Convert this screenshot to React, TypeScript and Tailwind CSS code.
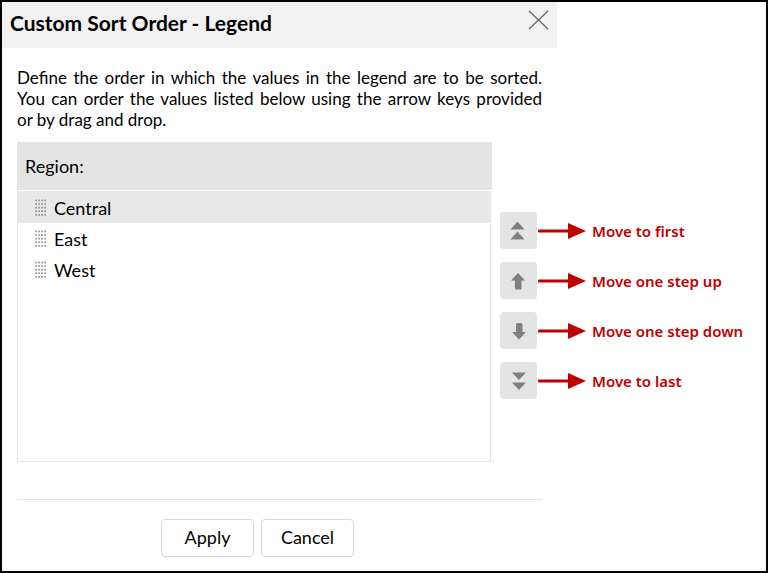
import { useState } from 'react';
import { clsx } from 'clsx';

interface MoveAction {
  id: string;
  label: string;
  path: string;
  target: (index: number, last: number) => number;
}

const actions: MoveAction[] = [
  {
    id: 'first',
    label: 'Move to first',
    path: 'M17.5 9.5L24.5 17.5H10.5ZM17.5 19.5L24.5 27.5H10.5Z',
    target: () => 0,
  },
  {
    id: 'up',
    label: 'Move one step up',
    path: 'M18 11L25 18.5H21.5V26Q21.5 27.5 20 27.5H16.5Q15 27.5 15 26V18.5H11Z',
    target: (index) => Math.max(0, index - 1),
  },
  {
    id: 'down',
    label: 'Move one step down',
    path: 'M19 27.5L26 20H22.5V12.5Q22.5 11 21 11H17.5Q16 11 16 12.5V20H12Z',
    target: (index, last) => Math.min(last, index + 1),
  },
  {
    id: 'last',
    label: 'Move to last',
    path: 'M12 10.5H26L19 18ZM12 20.5H26L19 28Z',
    target: (_, last) => last,
  },
];

function DragHandle() {
  return (
    <svg width="11" height="17" viewBox="0 0 11 17" fill="#8c8c8c" aria-hidden="true">
      {[0.3, 3.3, 6.3, 9.3].map((x) =>
        [0.6, 4.2, 7.8, 11.4, 15].map((y) => <rect key={`${x}-${y}`} x={x} y={y} width="1.6" height="1.7" />)
      )}
    </svg>
  );
}

function Pointer() {
  return (
    <svg width="49" height="18" viewBox="0 0 49 18" fill="#c00000" aria-hidden="true">
      <rect x="1" y="7.5" width="32" height="3" rx="1" />
      <path d="M31 1L49 9L31 17Z" />
    </svg>
  );
}

export default function App() {
  const [regions, setRegions] = useState(['Central', 'East', 'West']);
  const [selected, setSelected] = useState('Central');

  const move = (action: MoveAction) => {
    const from = regions.indexOf(selected);
    const next = regions.filter((region) => region !== selected);
    next.splice(action.target(from, regions.length - 1), 0, selected);
    setRegions(next);
  };

  return (
    <main className="min-h-screen border-2 border-black bg-white font-['Lato',sans-serif] text-lg text-black">
      <header className="flex h-[46px] max-w-[555px] items-start justify-between bg-[#f1f1f1] px-2 pt-[7px]">
        <h1 className="text-[21px] leading-7 font-bold">Custom Sort Order - Legend</h1>
        <button type="button" aria-label="Close" className="pt-px">
          <svg width="21" height="20" viewBox="0 0 21 20" fill="none" stroke="#666" strokeWidth="1.3">
            <path d="M1 1L20 19M20 1L1 19" />
          </svg>
        </button>
      </header>

      <div className="px-[15px]">
        <p className="max-w-[525px] pt-[19px] text-justify text-[17px] leading-[21px]">
          Define the order in which the values in the legend are to be sorted. You can order the values listed below
          using the arrow keys provided <span className="whitespace-nowrap">or by drag</span> and drop.
        </p>

        <div className="mt-3 flex items-start gap-2">
          <section className="max-w-[475px] flex-1">
            <h2 className="flex h-12 items-center bg-[#e4e4e4] px-2">Region:</h2>
            <ul className="mt-px mr-px h-[271px] border border-[#e5e5e5]">
              {regions.map((region) => (
                <li key={region} draggable>
                  <button
                    type="button"
                    onClick={() => setSelected(region)}
                    className={clsx(
                      'flex h-[31px] w-full items-center gap-2 px-[17px] text-left',
                      region === selected && 'bg-[#e8e8e8]'
                    )}
                  >
                    <DragHandle />
                    {region}
                  </button>
                </li>
              ))}
            </ul>
          </section>

          <ul className="flex flex-none flex-col gap-[13px] pt-[70px]">
            {actions.map((action) => (
              <li key={action.id} className="flex items-center">
                <button
                  type="button"
                  aria-labelledby={action.id}
                  onClick={() => move(action)}
                  className="size-[37px] rounded-sm bg-[#e4e4e4]"
                >
                  <svg width="37" height="37" viewBox="0 0 37 37" fill="#808080">
                    <path d={action.path} />
                  </svg>
                </button>
                <Pointer />
                <span
                  id={action.id}
                  className="pl-1.5 font-['Noto_Sans',sans-serif] text-[15px] leading-5 font-semibold text-[#c00000]"
                >
                  {action.label}
                </span>
              </li>
            ))}
          </ul>
        </div>

        <footer className="mt-[37px] flex max-w-[525px] gap-[7px] border-t border-[#e5e5e5] pt-[19px] pl-36">
          <button type="button" className="h-[38px] w-[93px] rounded-sm border border-[#d6d6d6] pb-0.5">
            Apply
          </button>
          <button type="button" className="h-[38px] w-[93px] rounded-sm border border-[#d6d6d6] pb-0.5">
            Cancel
          </button>
        </footer>
      </div>
    </main>
  );
}
